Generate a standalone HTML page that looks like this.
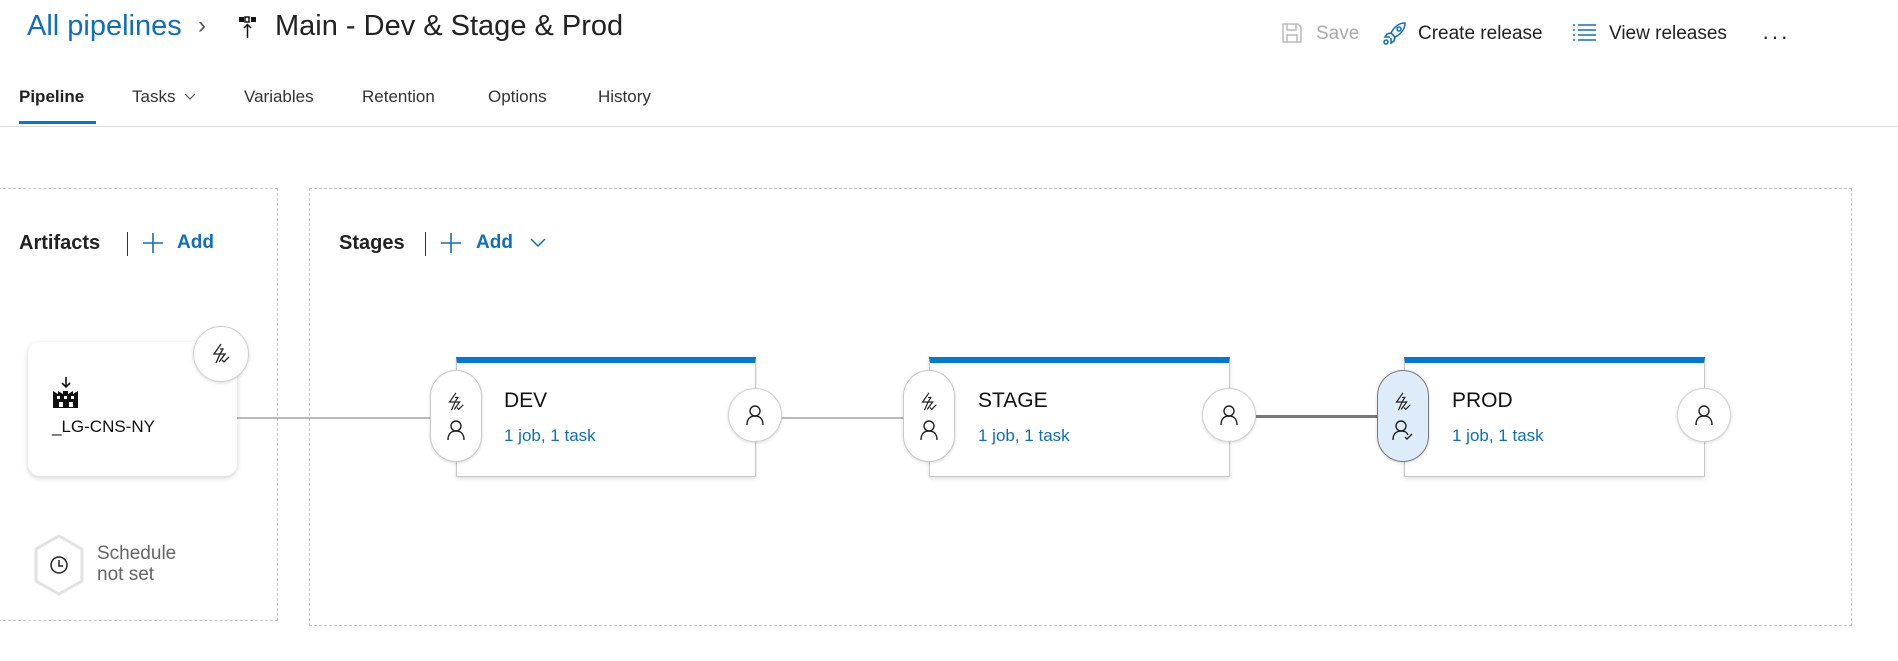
<!DOCTYPE html>
<html><head><meta charset="utf-8"><style>
*{margin:0;padding:0;box-sizing:border-box}
body{width:1898px;height:661px;background:#fff;font-family:"Liberation Sans",Arial,sans-serif;color:#222;position:relative;overflow:hidden}
.a{position:absolute}
.t{font-size:17px;top:87px;color:#333}
.box{border:1px dashed #c8c8c8}
.card{position:absolute;background:#fff;border:1px solid #c8c8c8;border-top:6px solid #0078d4;box-shadow:0 2px 4px rgba(0,0,0,.12)}
.circ{position:absolute;width:54px;height:54px;border-radius:50%;background:#fff;border:1px solid #d0d0d0;box-shadow:0 1px 3px rgba(0,0,0,.15);display:flex;align-items:center;justify-content:center}
.pill{position:absolute;width:52px;height:92px;border-radius:26px;background:#fff;border:1px solid #c8c8c8;box-shadow:0 1px 3px rgba(0,0,0,.15);display:flex;flex-direction:column;align-items:center;justify-content:center;gap:6px}
.nm{position:absolute;font-size:21px;color:#111}
.sub{position:absolute;font-size:17px;color:#106ebe}
.line{position:absolute;height:2px;background:#bbb}
</style></head><body>
<div class="a" style="left:27px;top:10px;font-size:29px;color:#106ebe">All pipelines</div>
<div class="a" style="left:198px;top:12px;font-size:24px;color:#555">&#x203A;</div>
<svg class="a" style="left:238px;top:16px" width="20" height="24" viewBox="0 0 20 24"><rect x="1" y="1" width="5" height="5" fill="#111"/><rect x="7" y="1" width="4" height="5" fill="none" stroke="#111" stroke-width="1.5"/><rect x="13" y="1" width="5" height="5" fill="#111"/><path d="M9.5 22V9M6 12l3.5-3.5L13 12" stroke="#111" stroke-width="1.5" fill="none"/></svg>
<div class="a" style="left:275px;top:10px;font-size:29px;color:#222">Main - Dev &amp; Stage &amp; Prod</div>

<svg class="a" style="left:1281px;top:22px" width="22" height="22" viewBox="0 0 22 22"><path d="M2 2h15l3 3v15H2z M6 2v6h9V2 M6 20v-7h10v7" fill="none" stroke="#bbb" stroke-width="1.5"/></svg>
<div class="a" style="left:1316px;top:23px;font-size:19px;color:#aaa">Save</div>
<svg class="a" style="left:1382px;top:20px" width="26" height="26" viewBox="0 0 26 26"><path d="M23 3c-6 0-11 4-14 10l4 4c6-3 10-8 10-14z M9 13l-4 1-2 3 5 0 M13 17l-1 4-3 2 0-5" fill="none" stroke="#106ebe" stroke-width="1.6"/><circle cx="17" cy="9" r="2" fill="none" stroke="#106ebe" stroke-width="1.5"/><circle cx="4" cy="22" r="2" fill="none" stroke="#106ebe" stroke-width="1.5"/></svg>
<div class="a" style="left:1418px;top:23px;font-size:19px;color:#222">Create release</div>
<svg class="a" style="left:1573px;top:23px" width="24" height="20" viewBox="0 0 24 20"><g stroke="#106ebe" stroke-width="1.6"><path d="M0 2h2M0 7h2M0 12h2M0 17h2"/><path d="M5 2h18M5 7h18M5 12h18M5 17h18"/></g></svg>
<div class="a" style="left:1609px;top:23px;font-size:19px;color:#222">View releases</div>
<div class="a" style="left:1762px;top:24px;font-size:22px;color:#222;letter-spacing:2px">···</div>

<div class="a t" style="left:19px;font-weight:bold;color:#222">Pipeline</div>
<div class="a" style="left:19px;top:121px;width:77px;height:3px;background:#0078d4"></div>
<div class="a t" style="left:132px">Tasks</div>
<svg class="a" style="left:184px;top:93px" width="12" height="8" viewBox="0 0 12 8"><path d="M1 1l5 5 5-5" fill="none" stroke="#555" stroke-width="1.2"/></svg>
<div class="a t" style="left:244px">Variables</div>
<div class="a t" style="left:362px">Retention</div>
<div class="a t" style="left:488px">Options</div>
<div class="a t" style="left:598px">History</div>
<div class="a" style="left:0;top:126px;width:1898px;height:1px;background:#ddd"></div>

<div class="a box" style="left:-2px;top:188px;width:280px;height:433px"></div>
<div class="a box" style="left:309px;top:188px;width:1543px;height:438px"></div>

<div class="a" style="left:19px;top:232px;font-size:20px;font-weight:bold;color:#222">Artifacts</div>
<div class="a" style="left:127px;top:232px;width:1px;height:24px;background:#333"></div>
<svg class="a" style="left:142px;top:232px" width="22" height="22" viewBox="0 0 22 22"><path d="M11 1v20M1 11h20" stroke="#106ebe" stroke-width="1.6"/></svg>
<div class="a" style="left:177px;top:232px;font-size:19px;font-weight:bold;color:#106ebe">Add</div>

<div class="a" style="left:339px;top:232px;font-size:20px;font-weight:bold;color:#222">Stages</div>
<div class="a" style="left:425px;top:232px;width:1px;height:24px;background:#333"></div>
<svg class="a" style="left:440px;top:232px" width="22" height="22" viewBox="0 0 22 22"><path d="M11 1v20M1 11h20" stroke="#106ebe" stroke-width="1.6"/></svg>
<div class="a" style="left:476px;top:232px;font-size:19px;font-weight:bold;color:#106ebe">Add</div>
<svg class="a" style="left:530px;top:238px" width="16" height="10" viewBox="0 0 16 10"><path d="M1 1l7 7 7-7" fill="none" stroke="#106ebe" stroke-width="1.5"/></svg>

<div class="line" style="left:237px;top:417px;width:220px"></div>
<div class="a" style="left:28px;top:342px;width:209px;height:134px;background:#fff;border-radius:12px;box-shadow:0 2px 6px rgba(0,0,0,.18)"></div>
<svg class="a" style="left:52px;top:377px" width="28" height="32" viewBox="0 0 28 32"><path d="M14 0v10M10 6l4 4 4-4" stroke="#111" stroke-width="1.6" fill="none"/><path d="M1 31V14l5 3v-3l5 3v-3h5v3l5-3v3l5-3v17z" fill="#111"/><rect x="5" y="19" width="3" height="3" fill="#fff"/><rect x="12" y="19" width="3" height="3" fill="#fff"/><rect x="19" y="19" width="3" height="3" fill="#fff"/><rect x="7" y="25" width="4" height="5" fill="#fff"/><rect x="17" y="25" width="4" height="5" fill="#fff"/></svg>
<div class="a" style="left:52px;top:417px;font-size:17px;color:#111">_LG-CNS-NY</div>
<div class="circ" style="left:193px;top:326px;width:56px;height:56px"><svg width="24" height="24" viewBox="0 0 24 24"><path d="M12 2L5 12h6l-4 9 M11 7l3 0-3 5h5l-6 8" fill="none" stroke="#222" stroke-width="1.3"/><path d="M13 18l2 2 5-5" fill="none" stroke="#222" stroke-width="1.3"/></svg></div>

<svg class="a" style="left:32px;top:534px" width="54" height="62" viewBox="0 0 54 62"><path d="M27 2l23 13v32L27 60 4 47V15z" fill="#fff" stroke="#e2e2e2" stroke-width="3"/><circle cx="27" cy="31" r="8" fill="none" stroke="#222" stroke-width="1.5"/><path d="M27 26v6h4" fill="none" stroke="#222" stroke-width="1.5"/></svg>
<div class="a" style="left:97px;top:543px;font-size:19px;color:#666;line-height:21px">Schedule<br>not set</div>

<div class="line" style="left:780px;top:417px;width:150px"></div>
<div class="line" style="left:1256px;top:415px;width:150px;height:3px;background:#777"></div>

<div class="card" style="left:456px;top:357px;width:300px;height:120px"></div>
<div class="card" style="left:929px;top:357px;width:301px;height:120px"></div>
<div class="card" style="left:1404px;top:357px;width:301px;height:120px"></div>

<div class="nm" style="left:504px;top:389px">DEV</div><div class="sub" style="left:504px;top:426px">1 job, 1 task</div>
<div class="nm" style="left:978px;top:389px">STAGE</div><div class="sub" style="left:978px;top:426px">1 job, 1 task</div>
<div class="nm" style="left:1452px;top:389px">PROD</div><div class="sub" style="left:1452px;top:426px">1 job, 1 task</div>

<div class="pill" style="left:430px;top:370px"><svg width="22" height="22" viewBox="0 0 24 24"><path d="M12 2L5 12h6l-4 9 M11 7l3 0-3 5h5l-6 8" fill="none" stroke="#222" stroke-width="1.3"/><path d="M13 18l2 2 5-5" fill="none" stroke="#222" stroke-width="1.3"/></svg><svg width="22" height="22" viewBox="0 0 22 22"><circle cx="11" cy="7" r="5" fill="none" stroke="#222" stroke-width="1.4"/><path d="M3 21c0-6 3-9 8-9s8 3 8 9" fill="none" stroke="#222" stroke-width="1.4"/></svg></div>
<div class="pill" style="left:903px;top:370px"><svg width="22" height="22" viewBox="0 0 24 24"><path d="M12 2L5 12h6l-4 9 M11 7l3 0-3 5h5l-6 8" fill="none" stroke="#222" stroke-width="1.3"/><path d="M13 18l2 2 5-5" fill="none" stroke="#222" stroke-width="1.3"/></svg><svg width="22" height="22" viewBox="0 0 22 22"><circle cx="11" cy="7" r="5" fill="none" stroke="#222" stroke-width="1.4"/><path d="M3 21c0-6 3-9 8-9s8 3 8 9" fill="none" stroke="#222" stroke-width="1.4"/></svg></div>
<div class="pill" style="left:1377px;top:370px;background:#deecf9;border-color:#777"><svg width="22" height="22" viewBox="0 0 24 24"><path d="M12 2L5 12h6l-4 9 M11 7l3 0-3 5h5l-6 8" fill="none" stroke="#222" stroke-width="1.3"/><path d="M13 18l2 2 5-5" fill="none" stroke="#222" stroke-width="1.3"/></svg><svg width="24" height="22" viewBox="0 0 24 22"><circle cx="10" cy="7" r="5" fill="none" stroke="#222" stroke-width="1.4"/><path d="M2 21c0-6 3-9 8-9s6 2 7 4" fill="none" stroke="#222" stroke-width="1.4"/><path d="M14 18l2 2 5-5" fill="none" stroke="#222" stroke-width="1.4"/></svg></div>

<div class="circ" style="left:728px;top:388px"><svg width="22" height="22" viewBox="0 0 22 22"><circle cx="11" cy="7" r="5" fill="none" stroke="#222" stroke-width="1.4"/><path d="M3 21c0-6 3-9 8-9s8 3 8 9" fill="none" stroke="#222" stroke-width="1.4"/></svg></div>
<div class="circ" style="left:1202px;top:388px"><svg width="22" height="22" viewBox="0 0 22 22"><circle cx="11" cy="7" r="5" fill="none" stroke="#222" stroke-width="1.4"/><path d="M3 21c0-6 3-9 8-9s8 3 8 9" fill="none" stroke="#222" stroke-width="1.4"/></svg></div>
<div class="circ" style="left:1677px;top:388px"><svg width="22" height="22" viewBox="0 0 22 22"><circle cx="11" cy="7" r="5" fill="none" stroke="#222" stroke-width="1.4"/><path d="M3 21c0-6 3-9 8-9s8 3 8 9" fill="none" stroke="#222" stroke-width="1.4"/></svg></div>
</body></html>
